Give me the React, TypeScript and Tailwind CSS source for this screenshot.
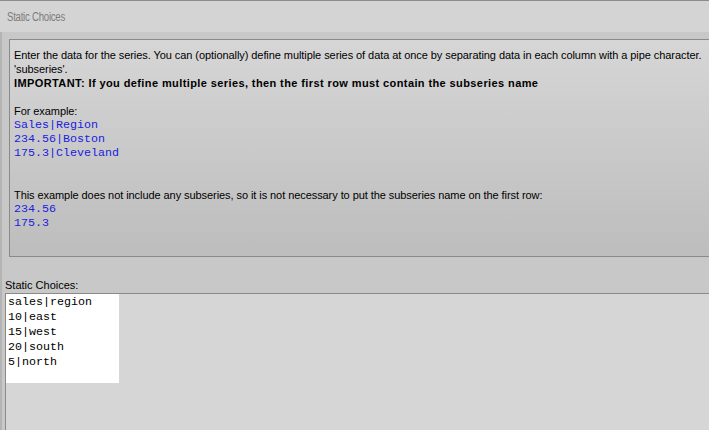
import React from "react";

export default function App() {
  const mono = "font-['Liberation_Mono',monospace] text-[11.67px] leading-[14px] text-[#2020e0] tracking-normal";
  return (
    <div className="w-[709px] h-[430px] overflow-hidden bg-[#c8c8c8] flex flex-col font-['Liberation_Sans',sans-serif] text-[11px] text-black">
      <div className="h-px bg-[#8c8c8c] shrink-0" />
      <div className="h-[31px] shrink-0 bg-[#d4d4d4] flex items-center pl-[7px] text-[#7c7c7c]">
        <span className="inline-block origin-left scale-x-[0.8] text-[12px] tracking-[-0.3px]">Static Choices</span>
      </div>
      <div className="flex-1 flex flex-col border-l-2 border-[#b4b4b4]">
        <div className="pt-[7px] pl-[7px]">
          <div className="h-[218px] border border-r-0 border-[#8a8a8a] bg-gradient-to-b from-[#d6d6d6] to-[#bdbdbd] pl-[4px] pt-[8px] leading-[14px] whitespace-nowrap tracking-[-0.07px]">
            <div>Enter the data for the series. You can (optionally) define multiple series of data at once by separating data in each column with a pipe character.</div>
            <div>'subseries'.</div>
            <div className="font-bold tracking-[0.4px]">IMPORTANT: If you define multiple series, then the first row must contain the subseries name</div>
            <div className="h-[14px]" />
            <div>For example:</div>
            <div className={mono}>Sales|Region</div>
            <div className={mono}>234.56|Boston</div>
            <div className={mono}>175.3|Cleveland</div>
            <div className="h-[28px]" />
            <div>This example does not include any subseries, so it is not necessary to put the subseries name on the first row:</div>
            <div className={mono}>234.56</div>
            <div className={mono}>175.3</div>
          </div>
        </div>
        <div className="h-[36px] shrink-0 flex items-end pl-[3px] pb-[1px] leading-[14px]">Static Choices:</div>
        <div className="flex-1 ml-[3px] border-t border-l border-[#8a8a8a] bg-[#d6d6d6]">
          <div className="w-[113px] h-[89px] bg-white pl-[2px] pt-[1px] font-['Liberation_Mono',monospace] text-[11.67px] leading-[15px] text-black">
            <div>sales|region</div>
            <div>10|east</div>
            <div>15|west</div>
            <div>20|south</div>
            <div>5|north</div>
          </div>
        </div>
      </div>
    </div>
  );
}
